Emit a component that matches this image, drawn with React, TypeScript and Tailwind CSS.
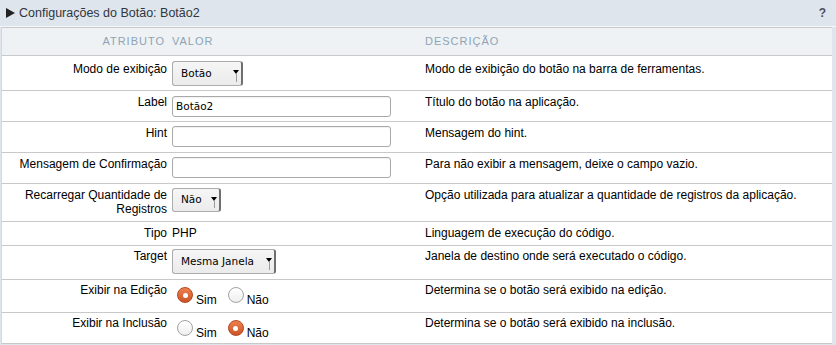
import React from 'react';

const Select: React.FC<{ value: string; width: string; height: string }> = ({ value, width, height }) => (
  <div
    className={`relative flex items-center rounded-[3px] border border-[#adadad] border-r-[2px] border-r-[#6f6f6f] bg-gradient-to-b from-[#f6f6f6] to-[#ebebeb] pl-[8px] font-['DejaVu_Sans',sans-serif] text-[10.5px] text-black ${width} ${height}`}
  >
    {value}
    <span className="absolute right-[2px] top-[8px] h-0 w-0 border-x-[3px] border-t-[4px] border-x-transparent border-t-black" />
    <span className="absolute right-[4px] top-[11px] bottom-[3px] w-px bg-[#9a9a9a]" />
  </div>
);

const TextInput: React.FC<{ value?: string }> = ({ value }) => (
  <div className="flex h-[21px] w-[219px] items-center rounded-[3px] border border-[#a9a9a9] bg-white pl-[3px] font-['DejaVu_Sans',sans-serif] text-[10.5px] text-black shadow-[inset_0_1px_1px_rgba(0,0,0,0.06)]">
    {value}
  </div>
);

const Radio: React.FC<{ checked?: boolean }> = ({ checked }) =>
  checked ? (
    <span className="flex h-[16px] w-[16px] shrink-0 items-center justify-center rounded-full border border-[#b4481f] bg-gradient-to-b from-[#ef8050] to-[#cc5326]">
      <span className="block h-[5px] w-[5px] rounded-full bg-white" />
    </span>
  ) : (
    <span className="block h-[16px] w-[16px] shrink-0 rounded-full border border-[#a3a3a3] bg-gradient-to-b from-white to-[#eeeeee]" />
  );

const RadioGroup: React.FC<{ sim: boolean }> = ({ sim }) => (
  <div className="flex items-start pl-[5px] pt-[7px] text-[12px]">
    <Radio checked={sim} />
    <span className="ml-[3px] mt-[6px] leading-[14px]">Sim</span>
    <span className="ml-[11px] flex">
      <Radio checked={!sim} />
    </span>
    <span className="ml-[3px] mt-[6px] leading-[14px]">Não</span>
  </div>
);

type Row = {
  label: React.ReactNode;
  value: React.ReactNode;
  desc: string;
  h: string;
  pt: string;
};

const rows: Row[] = [
  {
    label: 'Modo de exibição',
    value: (
      <div className="pt-[5px]">
        <Select value="Botão" width="w-[71px]" height="h-[25px]" />
      </div>
    ),
    desc: 'Modo de exibição do botão na barra de ferramentas.',
    h: 'h-[35px]',
    pt: 'pt-[6px]',
  },
  {
    label: 'Label',
    value: (
      <div className="pt-[5px]">
        <TextInput value="Botão2" />
      </div>
    ),
    desc: 'Título do botão na aplicação.',
    h: 'h-[31px]',
    pt: 'pt-[4px]',
  },
  {
    label: 'Hint',
    value: (
      <div className="pt-[4px]">
        <TextInput />
      </div>
    ),
    desc: 'Mensagem do hint.',
    h: 'h-[31px]',
    pt: 'pt-[4px]',
  },
  {
    label: 'Mensagem de Confirmação',
    value: (
      <div className="pt-[4px]">
        <TextInput />
      </div>
    ),
    desc: 'Para não exibir a mensagem, deixe o campo vazio.',
    h: 'h-[31px]',
    pt: 'pt-[4px]',
  },
  {
    label: (
      <>
        Recarregar Quantidade de
        <br />
        Registros
      </>
    ),
    value: (
      <div className="pt-[4px]">
        <Select value="Não" width="w-[49px]" height="h-[24px]" />
      </div>
    ),
    desc: 'Opção utilizada para atualizar a quantidade de registros da aplicação.',
    h: 'h-[38px]',
    pt: 'pt-[4px]',
  },
  {
    label: 'Tipo',
    value: <div className="pt-[4px] leading-[14px]">PHP</div>,
    desc: 'Linguagem de execução do código.',
    h: 'h-[24px]',
    pt: 'pt-[4px]',
  },
  {
    label: 'Target',
    value: (
      <div className="pt-[3px]">
        <Select value="Mesma Janela" width="w-[104px]" height="h-[25px]" />
      </div>
    ),
    desc: 'Janela de destino onde será executado o código.',
    h: 'h-[34px]',
    pt: 'pt-[3px]',
  },
  {
    label: 'Exibir na Edição',
    value: <RadioGroup sim={true} />,
    desc: 'Determina se o botão será exibido na edição.',
    h: 'h-[33px]',
    pt: 'pt-[3px]',
  },
  {
    label: 'Exibir na Inclusão',
    value: <RadioGroup sim={false} />,
    desc: 'Determina se o botão será exibido na inclusão.',
    h: 'h-[31px]',
    pt: 'pt-[3px]',
  },
];

export default function App() {
  return (
    <div className="h-[345px] w-[836px] overflow-hidden bg-[#dfe5ec] font-['Liberation_Sans',Arial,sans-serif] text-[12px] text-black">
      <div className="flex h-[27px] items-center justify-between border-b border-[#f4f6f8] pl-[6px] pr-[10px]">
        <div className="flex items-center text-[12.5px] text-[#2f3640]">
          <span className="mr-[4px] h-0 w-0 border-y-[5px] border-l-[9px] border-y-transparent border-l-[#222]" />
          Configurações do Botão: Botão2
        </div>
        <span className="text-[12px] font-bold text-[#4a5060]">?</span>
      </div>
      <div className="ml-[1px] mr-[4px] border-l border-[#d2d8de] bg-white">
        <div className="grid h-[29px] grid-cols-[170px_253px_1fr] items-center border-y border-[#c9c9c9] bg-[#eef2f5] text-[11px] tracking-[1px] text-[#8ea4b4]">
          <div className="pr-[7px] text-right">ATRIBUTO</div>
          <div>VALOR</div>
          <div>DESCRIÇÃO</div>
        </div>
        {rows.map((r, i) => (
          <div
            key={i}
            className={`grid grid-cols-[170px_253px_1fr] border-b border-[#c9c9c9] box-border ${r.h}`}
          >
            <div className={`pr-[5px] text-right leading-[14px] ${r.pt}`}>{r.label}</div>
            <div>{r.value}</div>
            <div className={`leading-[14px] ${r.pt}`}>{r.desc}</div>
          </div>
        ))}
      </div>
    </div>
  );
}
